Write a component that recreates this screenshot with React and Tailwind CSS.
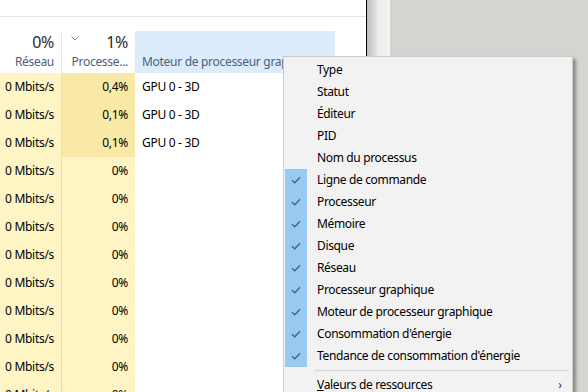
import React from "react";

const ROWS = [
  { net: "0 Mbits/s", cpu: "0,4%", gpu: "GPU 0 - 3D", hot: true },
  { net: "0 Mbits/s", cpu: "0,1%", gpu: "GPU 0 - 3D", hot: true },
  { net: "0 Mbits/s", cpu: "0,1%", gpu: "GPU 0 - 3D", hot: true },
  { net: "0 Mbits/s", cpu: "0%", gpu: "" },
  { net: "0 Mbits/s", cpu: "0%", gpu: "" },
  { net: "0 Mbits/s", cpu: "0%", gpu: "" },
  { net: "0 Mbits/s", cpu: "0%", gpu: "" },
  { net: "0 Mbits/s", cpu: "0%", gpu: "" },
  { net: "0 Mbits/s", cpu: "0%", gpu: "" },
  { net: "0 Mbits/s", cpu: "0%", gpu: "" },
  { net: "0 Mbits/s", cpu: "0%", gpu: "" },
  { net: "0 Mbits/s", cpu: "0%", gpu: "" },
];

const ITEMS = [
  { label: "Type" },
  { label: "Statut" },
  { label: "Éditeur" },
  { label: "PID" },
  { label: "Nom du processus" },
  { label: "Ligne de commande", checked: true },
  { label: "Processeur", checked: true },
  { label: "Mémoire", checked: true },
  { label: "Disque", checked: true },
  { label: "Réseau", checked: true },
  { label: "Processeur graphique", checked: true },
  { label: "Moteur de processeur graphique", checked: true },
  { label: "Consommation d'énergie", checked: true },
  { label: "Tendance de consommation d'énergie", checked: true },
];

function Check() {
  return (
    <svg width="10" height="8" viewBox="0 0 10 8" fill="none">
      <path d="M1 4.2 L3.8 6.8 L9 1.2" stroke="#3d6488" strokeWidth="1.3" />
    </svg>
  );
}

function ContextMenu() {
  return (
    <div className="absolute left-[283px] top-[56px] w-[290px] h-[345px] border border-[#cccccc] bg-[#f2f2f2] pt-[2px] pl-px shadow-[3px_3px_3px_rgba(0,0,0,0.35)]">
      {ITEMS.map((item) => (
        <div key={item.label} className="flex h-[22px] items-center">
          <div
            className={
              "flex h-full w-[22px] items-center justify-center " +
              (item.checked ? "bg-[#99c9f0]" : "")
            }
          >
            {item.checked && <Check />}
          </div>
          <span className="pl-[10px] text-[12px] tracking-[-0.35px] text-black">{item.label}</span>
        </div>
      ))}
      <div className="ml-[29px] mr-[3px] my-[3px] h-px bg-[#d7d7d7]" />
      <div className="flex h-[22px] items-center">
        <div className="w-[22px]" />
        <span className="pl-[10px] text-[12px] tracking-[-0.35px] text-black">
          <span className="underline">V</span>aleurs de ressources
        </span>
        <span className="ml-auto mr-[10px] text-[12px] text-[#333]">›</span>
      </div>
    </div>
  );
}

function Table() {
  return (
    <div className="w-[367px] border-r border-black bg-white tracking-[-0.3px]">
      <div className="h-[17px] border-b border-[#e3e3e3]" />
      <div className="h-[14px]" />
      <div className="flex h-[42px]">
        <div className="flex w-[62px] flex-col items-end border-r border-[#e5e5e5] pr-[7px] pt-[1px]">
          <span className="text-[16px] leading-[21px] text-[#2a2a2a]">0%</span>
          <span className="text-[12px] leading-[18px] text-[#4c607a]">Réseau</span>
        </div>
        <div className="relative flex w-[73px] flex-col items-end pr-[7px] pt-[1px]">
          <svg className="absolute left-[9px] top-[5px]" width="8" height="5" viewBox="0 0 8 5" fill="none">
            <path d="M0.5 0.5 L4 4 L7.5 0.5" stroke="#7b8799" strokeWidth="1" />
          </svg>
          <span className="text-[16px] leading-[21px] text-[#2a2a2a]">1%</span>
          <span className="text-[12px] leading-[18px] text-[#4c607a]">Processe...</span>
        </div>
        <div className="flex w-[200px] items-end overflow-hidden whitespace-nowrap bg-[#dcecfc] pb-[2px] pl-[7px]">
          <span className="text-[12px] leading-[18px] text-[#4c607a]">
            Moteur de processeur graphique
          </span>
        </div>
      </div>
      {ROWS.map((row, i) => (
        <div key={i} className="flex h-[28px] text-[12px] text-black">
          <div className="flex w-[62px] items-center justify-end border-r border-[#ecdfa6] bg-[#fff4c4] pr-[7px]">
            {row.net}
          </div>
          <div
            className={
              "flex w-[73px] items-center justify-end pr-[7px] " +
              (row.hot ? "bg-[#f9e9a6]" : "bg-[#fff4c4]")
            }
          >
            {row.cpu}
          </div>
          <div className="flex w-[200px] items-center pl-[7px]">{row.gpu}</div>
        </div>
      ))}
    </div>
  );
}

export default function App() {
  return (
    <div
      className="relative flex h-[392px] w-[588px] overflow-hidden bg-[#d5d4d0]"
      style={{ fontFamily: '"Noto Sans", "Open Sans", sans-serif' }}
    >
      <Table />
      <div className="h-full w-[23px] bg-gradient-to-r from-[#bdbdbd] via-[#ececec] to-[#f4f4f4]" />
      <ContextMenu />
    </div>
  );
}
